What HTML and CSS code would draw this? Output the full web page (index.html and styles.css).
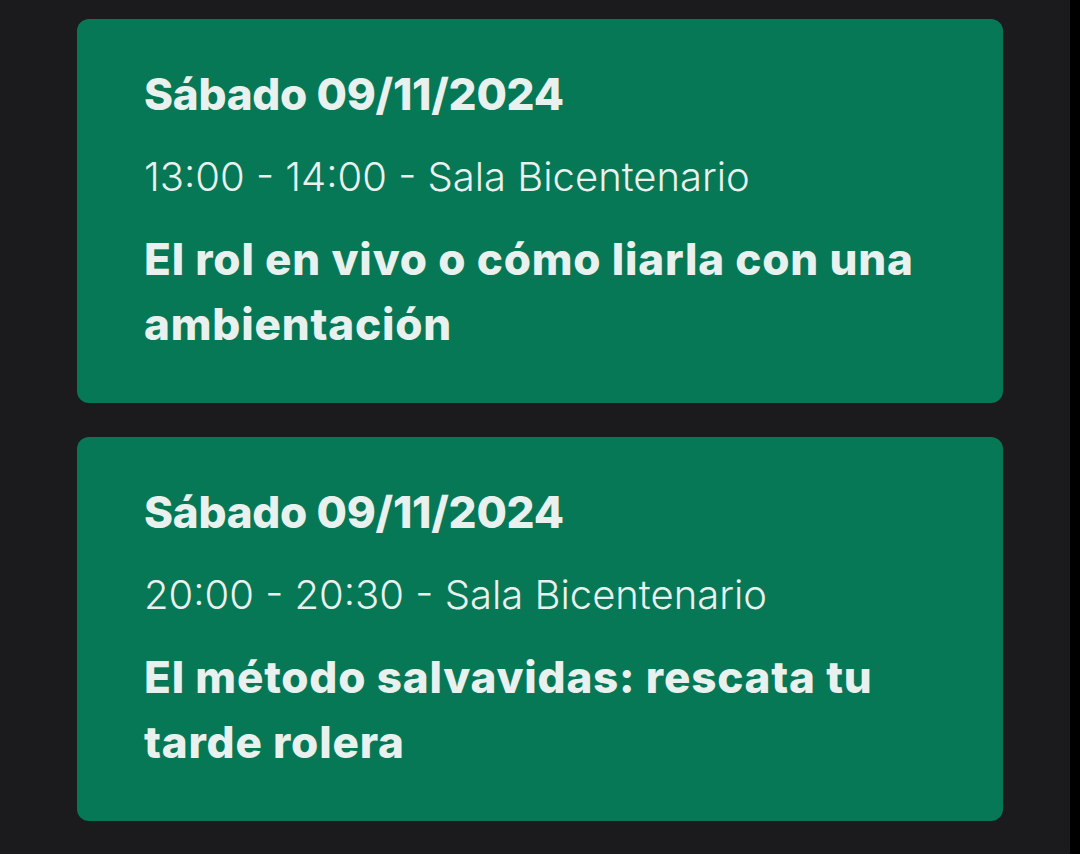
FILE: index.html
```html
<!DOCTYPE html>
<html lang="es">
<head>
<meta charset="utf-8">
<link rel="stylesheet" href="styles.css">
</head>
<body>
<div class="page">
  <main class="list">
    <section class="card">
      <h2 class="date">Sábado 09/11/2024</h2>
      <p class="time">13:00 - 14:00 - Sala Bicentenario</p>
      <h3 class="title">El rol en vivo o cómo liarla con una ambientación</h3>
    </section>
    <section class="card">
      <h2 class="date">Sábado 09/11/2024</h2>
      <p class="time">20:00 - 20:30 - Sala Bicentenario</p>
      <h3 class="title">El método salvavidas: rescata tu tarde rolera</h3>
    </section>
  </main>
  <div class="edge"></div>
</div>
</body>
</html>
```
FILE: styles.css
```css
html, body {
  margin: 0;
  padding: 0;
  background: #1b1b1d;
}
.page {
  display: flex;
  width: 1080px;
  height: 854px;
  overflow: hidden;
}
.list {
  flex: 1;
  display: flex;
  flex-direction: column;
  gap: 34px;
  padding: 19px 0 0 77px;
}
.edge {
  width: 10px;
  background: #000;
}
.card {
  width: 926px;
  height: 384px;
  box-sizing: border-box;
  background: #077856;
  border-radius: 12px;
  padding: 47px 60px 0 67px;
  color: #e9f1ee;
  font-family: Inter, "Noto Sans", sans-serif;
}
.date {
  margin: 0;
  font-size: 44px;
  line-height: 56px;
  font-weight: 800;
  letter-spacing: -0.25px;
}
.time {
  margin: 31px 0 0 0;
  font-size: 40px;
  line-height: 48px;
  font-weight: 300;
}
.title {
  margin: 26px 0 0 0;
  font-size: 44px;
  line-height: 65px;
  font-weight: 800;
  letter-spacing: 0.8px;
}
```
